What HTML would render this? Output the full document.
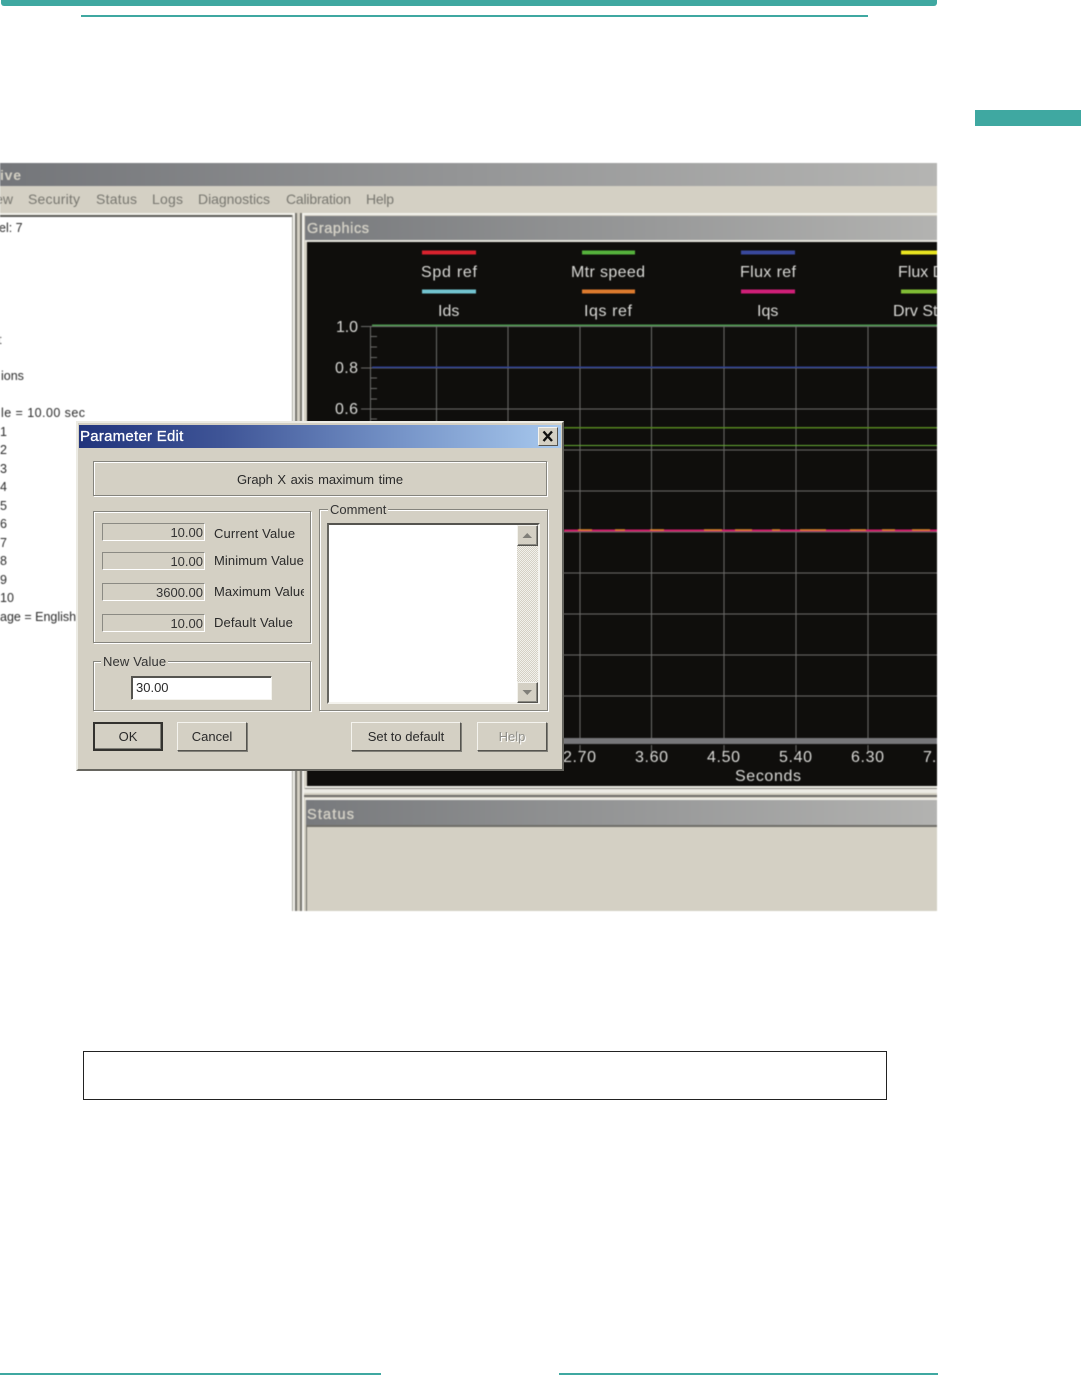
<!DOCTYPE html>
<html>
<head>
<meta charset="utf-8">
<style>
html,body{margin:0;padding:0;background:#fff;width:1081px;height:1394px;overflow:hidden}
body{position:relative;font-family:"Liberation Sans",sans-serif}
.a{position:absolute;box-sizing:border-box}
.t{position:absolute;white-space:nowrap;line-height:16px;height:16px}
.teal{background:#3fa8a1}
#app{left:0;top:163px;width:937px;height:748px;overflow:hidden;filter:blur(.45px)}
.d{font-size:13px;color:#2a2a2a}
.g{border:1px solid #85847d;box-shadow:1px 1px 0 #fff, inset 1px 1px 0 #fff}
.ro{left:102px;width:103px;height:18px;border:1px solid;border-color:#8b8a83 #fff #fff #8b8a83;background:#d4d0c4;}
.rov{position:absolute;right:1px;top:1px;font-size:13px;line-height:16px;color:#333}
.btn{top:722px;height:29px;background:#d4d0c4;border:1px solid;border-color:#f4f3ee #55544f #55544f #f4f3ee;box-shadow:1px 1px 0 #807f78;text-align:center;font-size:13px;line-height:27px;color:#2a2a2a}
.lab{font-size:13px;color:#333;background:#d4d0c4;padding:0 2px}
</style>
</head>
<body>
<!-- page furniture -->
<div class="a teal" style="left:1px;top:0;width:936px;height:6px;border-radius:0 0 3px 3px"></div>
<div class="a teal" style="left:81px;top:15px;width:787px;height:2px"></div>
<div class="a teal" style="left:975px;top:110px;width:106px;height:16px"></div>
<div class="a" style="left:83px;top:1051px;width:804px;height:49px;border:1px solid #222"></div>
<div class="a teal" style="left:0;top:1373px;width:381px;height:2px"></div>
<div class="a teal" style="left:559px;top:1373px;width:379px;height:2px"></div>

<div id="app" class="a">
<svg width="937" height="748" viewBox="0 163 937 748" style="position:absolute;left:0;top:0" font-family="Liberation Sans, sans-serif">
  <defs>
    <linearGradient id="tb" x1="0" x2="1"><stop offset="0" stop-color="#74767a"/><stop offset="1" stop-color="#b5b5b3"/></linearGradient>
    <linearGradient id="pb" x1="0" x2="1"><stop offset="0" stop-color="#787a7d"/><stop offset="1" stop-color="#b3b3b1"/></linearGradient>
  </defs>
  <rect x="0" y="163" width="937" height="748" fill="#d4d0c4"/>
  <rect x="0" y="163" width="937" height="23" fill="url(#tb)"/>
  <text x="0" y="180" font-size="14" font-weight="bold" fill="#d4d0c4" textLength="21">ive</text>
  <g font-size="14" fill="#77766f">
    <text x="-17" y="204" textLength="30">View</text>
    <text x="28" y="204" textLength="52">Security</text>
    <text x="96" y="204" textLength="41">Status</text>
    <text x="152" y="204" textLength="31">Logs</text>
    <text x="198" y="204" textLength="72">Diagnostics</text>
    <text x="286" y="204" textLength="65">Calibration</text>
    <text x="366" y="204" textLength="28">Help</text>
  </g>
  <rect x="0" y="213" width="937" height="2" fill="#f3f2ec"/>
  <!-- left pane -->
  <rect x="0" y="215" width="293" height="696" fill="#fff"/>
  <rect x="0" y="215" width="292" height="2" fill="#5a5a56"/>
  <g font-size="12.5" fill="#2b2b2b">
    <text x="-1" y="232">el: 7</text>
    <text x="-2" y="344">t</text>
    <text x="1" y="380">ions</text>
    <text x="1" y="417" textLength="84">le = 10.00 sec</text>
    <text x="0" y="436">1</text><text x="0" y="454">2</text><text x="0" y="473">3</text>
    <text x="0" y="491">4</text><text x="0" y="510">5</text><text x="0" y="528">6</text>
    <text x="0" y="547">7</text><text x="0" y="565">8</text><text x="0" y="584">9</text>
    <text x="0" y="602">10</text>
    <text x="0" y="621">age = English</text>
  </g>
  <!-- splitter -->
  <rect x="292" y="215" width="1" height="696" fill="#a9a89f"/>
  <rect x="293" y="213" width="2" height="698" fill="#f4f3ee"/>
  <rect x="295" y="213" width="2" height="698" fill="#77766f"/>
  <rect x="297" y="213" width="3" height="698" fill="#d4d0c4"/>
  <rect x="300" y="213" width="2" height="698" fill="#77766f"/>
  <rect x="302" y="213" width="2" height="698" fill="#f4f3ee"/>
  <!-- graphics panel -->
  <rect x="305" y="216" width="632" height="24" fill="url(#pb)"/>
  <text x="307" y="233" font-size="14.500" fill="#d4d1c6" stroke="#d4d1c6" stroke-width=".35" textLength="62">Graphics</text>
  <rect x="305" y="240" width="632" height="2" fill="#e6e5dd"/>
  <rect x="307" y="242" width="630" height="544" fill="#0f0e0c"/>
  <!-- grid -->
  <g stroke="#6c6c6a" stroke-width="1">
    <path d="M361 326.500H937M361 368H937M361 409H937M361 450H937M361 491H937M361 532H937M361 573H937M361 614H937M361 655H937M361 696H937"/>
    <path d="M370.500 326V738M436.500 326V738M508 326V738M580 326V738M651.500 326V738M724 326V738M796 326V738M868 326V738"/>
    <path d="M370 336.500H377M370 347H377M370 357.500H377M370 378H377M370 388.500H377M370 399H377M370 419H377"/>
    <path d="M580 745V752M651.500 745V752M724 745V752M796 745V752M868 745V752"/>
  </g>
  <rect x="370" y="738" width="567" height="6" fill="#77777a"/>
  <!-- traces -->
  <rect x="372" y="324.500" width="565" height="1.500" fill="#4d9a4f"/>
  <rect x="372" y="366.500" width="565" height="1.500" fill="#2c3f92"/>
  <rect x="564" y="427" width="373" height="1.500" fill="#55861f"/>
  <rect x="564" y="445" width="373" height="1" fill="#66ad33"/>
  <rect x="564" y="529.500" width="373" height="2" fill="#cf1f6b"/>
  <path d="M578 530H592M615 530H625M650 530H664M704 530H722M735 530H752M772 530H780M800 530H826M850 530H866M882 530H895M912 530H930" stroke="#e58a2e" stroke-width="1.500"/>
  <!-- legend -->
  <g stroke-width="4">
    <path d="M422 252.500H476" stroke="#d9222e"/>
    <path d="M582 252.500H635" stroke="#55b13c"/>
    <path d="M741 252.500H795" stroke="#39489d"/>
    <path d="M901 252.500H937" stroke="#e8e420"/>
    <path d="M422 291.500H476" stroke="#72c4d0"/>
    <path d="M582 291.500H635" stroke="#dd7a2e"/>
    <path d="M741 291.500H795" stroke="#cf1f78"/>
    <path d="M901 291.500H937" stroke="#80bd35"/>
  </g>
  <g font-size="16" fill="#d9d9d6">
    <text x="421" y="277" textLength="56">Spd ref</text>
    <text x="571" y="277" textLength="74">Mtr speed</text>
    <text x="740" y="277" textLength="56">Flux ref</text>
    <text x="438" y="316">Ids</text>
    <text x="584" y="316" textLength="48">Iqs ref</text>
    <text x="757" y="316">Iqs</text>
    <text x="898" y="277">Flux D</text>
    <text x="893" y="316">Drv St</text>
    <text x="336" y="332" textLength="22">1.0</text>
    <text x="335" y="373" textLength="23">0.8</text>
    <text x="335" y="414" textLength="23">0.6</text>
    <text x="563" y="762" textLength="33">2.70</text>
    <text x="635" y="762" textLength="33">3.60</text>
    <text x="707" y="762" textLength="33">4.50</text>
    <text x="779" y="762" textLength="33">5.40</text>
    <text x="851" y="762" textLength="33">6.30</text>
    <text x="923" y="762">7.</text>
    <text x="735" y="781" textLength="66">Seconds</text>
  </g>
  <!-- lower separators -->
  <rect x="305" y="786" width="632" height="2" fill="#f0efe8"/>
  <rect x="305" y="788" width="632" height="1" fill="#8a8982"/>
  <rect x="304" y="789" width="633" height="4" fill="#ecebe4"/>
  <rect x="304" y="795" width="633" height="2" fill="#6f6e68"/>
  <rect x="305" y="798" width="632" height="2" fill="#f0efe8"/>
  <!-- status -->
  <rect x="306" y="800" width="631" height="25" fill="url(#pb)"/>
  <text x="307" y="819" font-size="14.500" fill="#d4d1c6" stroke="#d4d1c6" stroke-width=".35" textLength="47">Status</text>
  <rect x="306" y="825" width="631" height="2" fill="#6f6e68"/>
  <rect x="306" y="827" width="1" height="84" fill="#6f6e68"/>
</svg>
</div>

<!-- dialog -->
<div id="dlg" style="filter:blur(.35px)">
  <div class="a" style="left:76px;top:421px;width:488px;height:350px;background:#d4d0c4;border:2px solid;border-color:#ecebe4 #66655f #66655f #ecebe4"></div>
  <div class="a" style="left:79px;top:425px;width:482px;height:23px;background:linear-gradient(90deg,#21347c 0%,#3f5597 30%,#7391c6 65%,#a8c9ee 100%)"></div>
  <div class="t" style="left:80px;top:429px;font-size:15px;color:#fff;letter-spacing:.25px;-webkit-text-stroke:.3px #fff">Parameter Edit</div>
  <div class="a" style="left:538px;top:427px;width:20px;height:19px;background:#d4d0c4;border:1px solid;border-color:#f4f3ee #55544f #55544f #f4f3ee">
    <svg width="18" height="17" style="position:absolute;left:0;top:0"><path d="M4.500 3.500L13 13M13 3.500L4.500 13" stroke="#111" stroke-width="2.400"/></svg>
  </div>

  <div class="a g" style="left:93px;top:461px;width:454px;height:35px"></div>
  <div class="t d" style="left:93px;top:472px;width:454px;text-align:center;word-spacing:1px;letter-spacing:-.05px">Graph X axis maximum time</div>

  <div class="a g" style="left:93px;top:511px;width:218px;height:132px"></div>
  <div class="a ro" style="top:523px"><span class="rov">10.00</span></div>
  <div class="a ro" style="top:552px"><span class="rov">10.00</span></div>
  <div class="a ro" style="top:583px"><span class="rov">3600.00</span></div>
  <div class="a ro" style="top:614px"><span class="rov">10.00</span></div>
  <div class="t d" style="left:214px;top:526px;letter-spacing:.15px">Current Value</div>
  <div class="t d" style="left:214px;top:553px;width:90px;overflow:hidden;letter-spacing:.1px">Minimum Value</div>
  <div class="t d" style="left:214px;top:584px;width:90px;overflow:hidden;letter-spacing:.1px">Maximum Value</div>
  <div class="t d" style="left:214px;top:615px;letter-spacing:.15px">Default Value</div>

  <div class="a g" style="left:93px;top:661px;width:218px;height:50px"></div>
  <div class="t lab" style="left:101px;top:654px;letter-spacing:.15px">New Value</div>
  <div class="a" style="left:131px;top:676px;width:141px;height:24px;background:#fff;border:1px solid;border-color:#55544f #f4f3ee #f4f3ee #55544f;box-shadow:inset 1px 1px 0 #55544f"></div>
  <div class="t d" style="left:136px;top:680px">30.00</div>

  <div class="a g" style="left:319px;top:509px;width:229px;height:202px"></div>
  <div class="t lab" style="left:328px;top:502px">Comment</div>
  <div class="a" style="left:327px;top:523px;width:213px;height:181px;background:#fff;border:2px solid;border-color:#55544f #f4f3ee #f4f3ee #66655f"></div>
  <div class="a" style="left:517px;top:525px;width:21px;height:178px;background:repeating-conic-gradient(#d4d0c4 0 25%,#f2f1ec 0 50%) 0 0/2px 2px"></div>
  <div class="a" style="left:517px;top:525px;width:21px;height:21px;background:#d4d0c4;border:1px solid;border-color:#f4f3ee #55544f #55544f #f4f3ee;box-shadow:inset -1px -1px 0 #8a8982">
    <svg width="19" height="19" style="position:absolute;left:0;top:0"><path d="M4.500 12H14L9.250 7Z" fill="#807f79"/></svg>
  </div>
  <div class="a" style="left:517px;top:682px;width:21px;height:21px;background:#d4d0c4;border:1px solid;border-color:#f4f3ee #55544f #55544f #f4f3ee;box-shadow:inset -1px -1px 0 #8a8982">
    <svg width="19" height="19" style="position:absolute;left:0;top:0"><path d="M4.500 7H14L9.250 12Z" fill="#807f79"/></svg>
  </div>

  <div class="a btn" style="left:93px;width:70px;border:2px solid #33322f;line-height:25px;box-shadow:inset -1px -1px 0 #807f78">OK</div>
  <div class="a btn" style="left:177px;width:70px">Cancel</div>
  <div class="a btn" style="left:351px;width:110px">Set to default</div>
  <div class="a btn" style="left:477px;width:70px;color:#8f8e88;text-shadow:1px 1px 0 #fff">Help</div>
</div>
</body>
</html>
